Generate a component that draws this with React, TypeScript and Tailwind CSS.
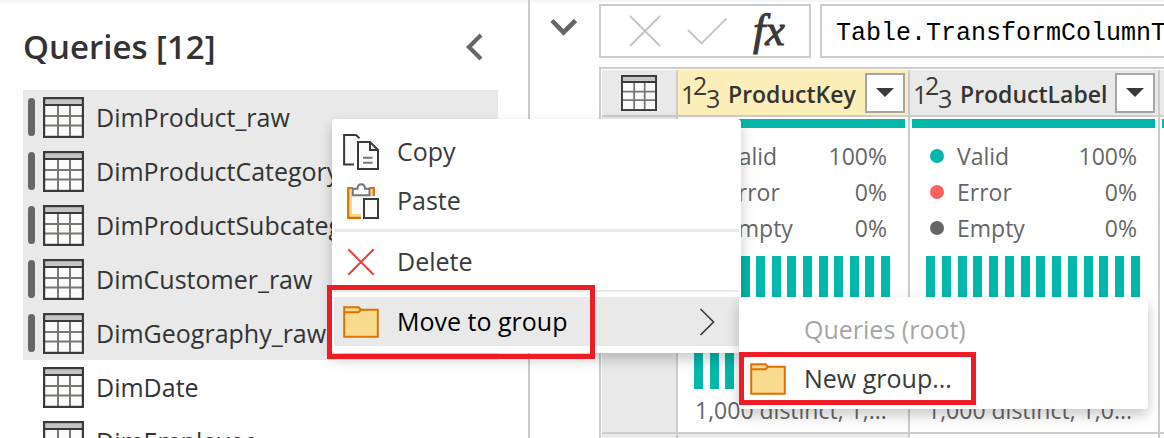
import React from "react";

const queries = [
  { name: "DimProduct_raw", selected: true },
  { name: "DimProductCategory_raw", selected: true },
  { name: "DimProductSubcategory_raw", selected: true },
  { name: "DimCustomer_raw", selected: true },
  { name: "DimGeography_raw", selected: true },
  { name: "DimDate", selected: false },
  { name: "DimEmployee", selected: false },
];

const columns = [
  { name: "ProductKey", bars: 13, active: true, summary: "1,000 distinct, 1,..." },
  { name: "ProductLabel", bars: 14, active: false, summary: "1,000 distinct, 1,0..." },
];

const quality = [
  { label: "Valid", value: "100%", dot: "bg-[#01b8aa]" },
  { label: "Error", value: "0%", dot: "bg-[#fd625e]" },
  { label: "Empty", value: "0%", dot: "bg-[#666666]" },
];

function TableIcon({ className }: { className: string }) {
  return (
    <svg className={className} viewBox="0 0 41 41" aria-hidden="true">
      <rect x="1" y="1" width="39" height="39" fill="#fafafa" />
      <rect x="1" y="1" width="39" height="7" fill="#c8c6c4" />
      <path d="M15 8V40M27 8V40M1 19H40M1 28.5H40" stroke="#797774" strokeWidth="2" fill="none" />
      <rect x="1" y="1" width="39" height="39" fill="none" stroke="#3a3a38" strokeWidth="2.4" />
      <path d="M1 8H40" stroke="#3a3a38" strokeWidth="2.2" />
    </svg>
  );
}

function FolderIcon() {
  return (
    <svg className="h-8 w-9" viewBox="0 0 36 32" aria-hidden="true">
      <path d="M1.2 1.2H15.5L18 3.7H34.8V30.8H1.2Z" fill="#f8db8f" stroke="#e07000" strokeWidth="2" />
      <path d="M1.2 6.2H15.5L18 3.7" fill="none" stroke="#e07000" strokeWidth="2" />
    </svg>
  );
}

function CopyIcon() {
  return (
    <svg className="h-9 w-9" viewBox="0 0 36 36" aria-hidden="true">
      <path d="M11 30.5H1.1V1.1H13L16.5 4.2" fill="#fafafa" stroke="#3a3a38" strokeWidth="2" />
      <path d="M15 8.1H27L35 16V35H15Z" fill="#fafafa" stroke="#3a3a38" strokeWidth="2" />
      <path d="M27 8.1V16H35" fill="none" stroke="#3a3a38" strokeWidth="2" />
      <path d="M20 23.7H29.5M20 28.8H29.5" stroke="#797774" strokeWidth="1.9" />
    </svg>
  );
}

function PasteIcon() {
  return (
    <svg className="h-9 w-9" viewBox="0 0 36 36" aria-hidden="true">
      <path d="M5 5H31V14H20V34.5H5Z" fill="#fafafa" />
      <path d="M10 7H7.5V32.5H18M26 7H28.5V13" fill="none" stroke="#f8db8f" strokeWidth="3" />
      <path d="M10 5H5.2V34.8H18M26 5H30.8V13" fill="none" stroke="#e07000" strokeWidth="2.2" />
      <path d="M9.8 12.2V5.8H14.5C14.5 -0.4 22 -0.4 22 5.8H26.5V12.2Z" fill="#fafafa" stroke="#797774" strokeWidth="2" />
      <rect x="21" y="16" width="14" height="19" fill="#fafafa" stroke="#3a3a38" strokeWidth="2" />
    </svg>
  );
}

function DeleteIcon() {
  return (
    <svg className="h-9 w-9" viewBox="0 0 36 36" aria-hidden="true">
      <path d="M5.3 5.3L30.7 30.7M30.7 5.3L5.3 30.7" stroke="#ee3d3d" strokeWidth="2" />
    </svg>
  );
}

function NumberTypeIcon() {
  return (
    <svg
      className="h-10 w-10 shrink-0 overflow-visible text-[25px] font-normal"
      viewBox="0 0 40 40"
      fill="#3a3a38"
      role="img"
      aria-label="Whole number"
    >
      <text x="-1" y="31">1</text>
      <text x="11" y="22">2</text>
      <text x="24" y="35">3</text>
    </svg>
  );
}

function MenuItem({
  icon,
  label,
  className = "text-[#3a3a3a]",
  disabled = false,
  trailing,
}: {
  icon?: React.ReactNode;
  label: string;
  className?: string;
  disabled?: boolean;
  trailing?: React.ReactNode;
}) {
  return (
    <button
      type="button"
      role="menuitem"
      disabled={disabled}
      className={`flex h-[49px] w-full items-center pl-[9px] pr-6 text-left text-[25px] ${className}`}
    >
      <span className="mr-[18px] flex w-9 shrink-0 justify-center">{icon}</span>
      <span className="grow whitespace-nowrap">{label}</span>
      {trailing}
    </button>
  );
}

function QueriesPane() {
  return (
    <aside className="w-[530px] shrink-0 border-r-2 border-[#cccccc] pl-[23px] pr-[30px]">
      <div className="flex h-[90px] items-center justify-between pt-1 pr-[14px]">
        <h1 className="text-[33px] font-semibold">Queries [12]</h1>
        <button type="button" aria-label="Collapse queries pane">
          <svg className="h-7 w-5" viewBox="0 0 20 28" aria-hidden="true">
            <path d="M17 2L5 14L17 26" fill="none" stroke="#666666" strokeWidth="4.2" />
          </svg>
        </button>
      </div>
      <ul>
        {queries.map((q) => (
          <li key={q.name}>
            <button
              type="button"
              aria-pressed={q.selected}
              className={`flex h-[54px] w-full items-center pl-[5px] text-left text-[25px] ${
                q.selected ? "bg-[#e9e9e9]" : ""
              }`}
            >
              <span className={`mr-2 h-[38px] w-[7px] rounded-full ${q.selected ? "bg-[#666666]" : ""}`} />
              <TableIcon className="mr-3 size-[41px]" />
              <span className="pt-[2px]">{q.name}</span>
            </button>
          </li>
        ))}
      </ul>
    </aside>
  );
}

function FormulaBar() {
  return (
    <div className="flex gap-[9px] pl-[69px]">
      <div className="flex h-[54px] w-[212px] shrink-0 items-center border-2 border-[#cccccc] pl-7">
        <button type="button" aria-label="Cancel">
          <svg className="size-8" viewBox="0 0 32 32" aria-hidden="true">
            <path d="M1 1L31 31M31 1L1 31" stroke="#c4c4c4" strokeWidth="1.9" />
          </svg>
        </button>
        <button type="button" aria-label="Apply" className="ml-[26px]">
          <svg className="h-8 w-10" viewBox="0 0 40 32" aria-hidden="true">
            <path d="M1 15L14.5 28.5L39.5 3.5" fill="none" stroke="#c4c4c4" strokeWidth="1.9" />
          </svg>
        </button>
        <button
          type="button"
          aria-label="Insert function"
          className="ml-[26px] h-[50px] font-['Liberation_Serif',serif] text-[44px] leading-[44px] text-[#3a3a38] italic [-webkit-text-stroke:1px_#3a3a38]"
        >
          fx
        </button>
      </div>
      <input
        aria-label="Formula"
        defaultValue="Table.TransformColumnTypes"
        className="h-[54px] w-0 min-w-0 grow border-2 border-r-0 border-[#cccccc] bg-[#fefefe] pt-1 pl-[14px] font-['Liberation_Mono',monospace] text-[25px] text-black outline-none"
      />
    </div>
  );
}

function ColumnProfile({ bars, summary }: { bars: number; summary: string }) {
  return (
    <div className="flex h-[315px] flex-col pt-[2px]">
      <div className="mr-[3px] ml-[2px] h-[9px] bg-[#01b8aa]" />
      <dl className="mt-[10px] pr-[21px] pl-5 text-[23px] text-[#666666]">
        {quality.map((q) => (
          <div key={q.label} className="flex h-9 items-center">
            <dt className="flex grow items-center gap-[13px]">
              <span className={`size-[14px] rounded-full ${q.dot}`} />
              {q.label}
            </dt>
            <dd>{q.value}</dd>
          </div>
        ))}
      </dl>
      <div className="mt-[10px] mr-[18px] ml-4 flex h-[133px] shrink-0 justify-between">
        {Array.from({ length: bars }, (_, i) => (
          <span key={i} className="w-[9px] bg-[#01b8aa]" />
        ))}
      </div>
      <p className="mt-[3px] pl-[17px] text-[23px] leading-9 whitespace-nowrap text-[#666666]">{summary}</p>
    </div>
  );
}

function PreviewTable() {
  return (
    <div className="mt-[9px] ml-[69px] border-t-2 border-l-2 border-[#cccccc] pt-px pl-px">
      <table className="w-full table-fixed border-separate border-spacing-0">
        <colgroup>
          <col className="w-[76px]" />
          <col className="w-[232px]" />
          <col className="w-[250px]" />
          <col />
        </colgroup>
        <thead>
          <tr className="h-[47px]">
            <th className="border-r-2 border-b-2 border-[#cccccc] bg-[#e9e9e9] p-0">
              <button type="button" aria-label="Table options" className="flex w-full justify-center">
                <TableIcon className="size-9" />
              </button>
            </th>
            {columns.map((c) => (
              <th
                key={c.name}
                scope="col"
                className={`border-r-2 border-b-2 border-[#cccccc] p-0 ${
                  c.active ? "bg-[#fbeeb8]" : "bg-[#e9e9e9]"
                }`}
              >
                <div className="flex h-[45px] items-center pr-[3px] pl-1">
                  <NumberTypeIcon />
                  <span className="ml-[6px] grow pt-1 text-left text-[23px] font-semibold">{c.name}</span>
                  <button
                    type="button"
                    aria-label={`Filter ${c.name}`}
                    className="flex size-10 shrink-0 items-center justify-center border-2 border-[#a6a6a6] bg-white"
                  >
                    <svg className="h-[9px] w-[18px]" viewBox="0 0 18 9" aria-hidden="true">
                      <path d="M0 0H18L9 9Z" fill="#3a3a38" />
                    </svg>
                  </button>
                </div>
              </th>
            ))}
            <th className="border-b-2 border-[#cccccc] bg-[#e9e9e9] p-0" />
          </tr>
        </thead>
        <tbody>
          <tr>
            <td className="border-r-2 border-b-2 border-[#cccccc] bg-[#e9e9e9] p-0" />
            {columns.map((c) => (
              <td key={c.name} className="border-r-2 border-b-2 border-[#cccccc] p-0">
                <ColumnProfile bars={c.bars} summary={c.summary} />
              </td>
            ))}
            <td className="border-b-2 border-[#cccccc] p-0 pt-[2px] align-top">
              <div className="ml-[2px] h-[9px] bg-[#01b8aa]" />
            </td>
          </tr>
          <tr className="h-10">
            <td className="border-r-2 border-[#cccccc] bg-[#e9e9e9] p-0" />
            <td className="border-r-2 border-[#cccccc] bg-[#e9e9e9] p-0" />
            <td className="border-r-2 border-[#cccccc] p-0" />
            <td className="p-0" />
          </tr>
        </tbody>
      </table>
    </div>
  );
}

function ContextMenu() {
  return (
    <>
      <div
        role="menu"
        aria-label="Query actions"
        className="absolute top-[119px] left-[332px] w-[409px] rounded bg-white px-[2px] pt-2 pb-[7px] shadow-[0_6px_14px_rgba(0,0,0,0.22)]"
      >
        <MenuItem icon={<CopyIcon />} label="Copy" />
        <MenuItem icon={<PasteIcon />} label="Paste" />
        <hr className="mt-1 mb-[5px] border-t-3 border-[#e9e9e9]" />
        <MenuItem icon={<DeleteIcon />} label="Delete" />
        <hr className="mt-1 mb-[5px] border-t-2 border-[#e9e9e9]" />
        <MenuItem
          icon={<FolderIcon />}
          label="Move to group"
          className="bg-[#e9e9e9] text-black"
          trailing={
            <svg className="h-7 w-4" viewBox="0 0 16 28" aria-hidden="true">
              <path d="M1.5 1L14.5 14L1.5 27" fill="none" stroke="#3a3a38" strokeWidth="1.7" />
            </svg>
          }
        />
      </div>
      <div
        role="menu"
        aria-label="Move to group"
        className="absolute top-[297px] left-[739px] w-[409px] rounded bg-white px-[2px] pt-2 pb-[6px] shadow-[0_6px_14px_rgba(0,0,0,0.22)]"
      >
        <MenuItem label="Queries (root)" className="text-[#a6a6a6]" disabled />
        <MenuItem icon={<FolderIcon />} label="New group..." />
      </div>
      <div className="pointer-events-none absolute top-[285px] left-[327px] h-[74px] w-[268px] border-5 border-[#ee1c25]" />
      <div className="pointer-events-none absolute top-[352px] left-[739px] h-[53px] w-[237px] border-5 border-[#ee1c25]" />
    </>
  );
}

export default function App() {
  return (
    <div className="relative flex h-screen overflow-hidden bg-white bg-linear-to-b from-[#f3f3f3] to-white bg-[length:100%_4px] bg-no-repeat font-['Open_Sans','Noto_Sans',sans-serif] text-[#333333]">
      <QueriesPane />
      <main className="relative min-w-0 grow pt-1">
        <button type="button" aria-label="Expand formula bar" className="absolute top-[17px] left-5">
          <svg className="h-5 w-7" viewBox="0 0 28 20" aria-hidden="true">
            <path d="M2 3.5L13.5 15.5L25.5 3.5" fill="none" stroke="#666666" strokeWidth="4.6" />
          </svg>
        </button>
        <FormulaBar />
        <PreviewTable />
      </main>
      <ContextMenu />
    </div>
  );
}
